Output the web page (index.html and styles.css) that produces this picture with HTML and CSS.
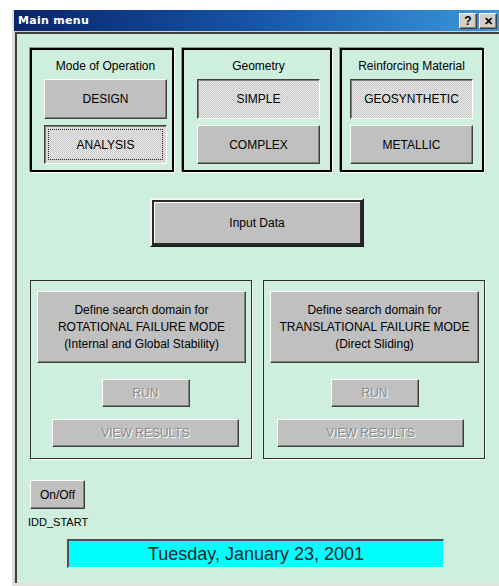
FILE: index.html
```html
<!DOCTYPE html>
<html>
<head>
    <meta charset="UTF-8">
    <title>Main menu</title>
    <link rel="stylesheet" href="styles.css">
</head>
<body>

<div class="window">
    <div class="titlebar">
        <span class="caption">Main menu</span>
        <div class="caption-buttons">
            <span class="cap-btn">?</span>
            <span class="cap-btn cap-close">&#x2715;</span>
        </div>
    </div>

    <div class="client">
        <div class="options">
            <div class="group group-mode">
                <div class="group-title">Mode of Operation</div>
                <button class="btn opt">DESIGN</button>
                <button class="btn opt checked focused"><span>ANALYSIS</span></button>
            </div>
            <div class="group group-geom">
                <div class="group-title">Geometry</div>
                <button class="btn opt checked">SIMPLE</button>
                <button class="btn opt">COMPLEX</button>
            </div>
            <div class="group group-mat">
                <div class="group-title">Reinforcing Material</div>
                <button class="btn opt checked">GEOSYNTHETIC</button>
                <button class="btn opt">METALLIC</button>
            </div>
        </div>

        <button class="btn btn-default">Input Data</button>

        <div class="domains">
            <div class="domain domain-rot">
                <button class="btn define">Define search domain for<br>ROTATIONAL FAILURE MODE<br>(Internal and Global Stability)</button>
                <button class="btn run" disabled>RUN</button>
                <button class="btn results" disabled>VIEW RESULTS</button>
            </div>
            <div class="domain domain-tra">
                <button class="btn define">Define search domain for<br>TRANSLATIONAL FAILURE MODE<br>(Direct Sliding)</button>
                <button class="btn run" disabled>RUN</button>
                <button class="btn results" disabled>VIEW RESULTS</button>
            </div>
        </div>

        <button class="btn onoff">On/Off</button>
        <div class="status-label">IDD_START</div>
        <div class="date-box">Tuesday, January 23, 2001</div>
    </div>
</div>

</body>
</html>
```

FILE: styles.css
```css
body {
    margin: 0;
    background: #fff;
    overflow: hidden;
    font-family: "Liberation Sans", Arial, sans-serif;
    font-size: 12px;
    color: #000;
}

.window {
    margin: 10px 0 0 12px;
    width: 485px;
    border-left: 2px solid #e4e2dc;
    border-bottom: 3px solid #e4e2dc;
    background: #d4d0c8;
}

/* title bar */
.titlebar {
    height: 21px;
    display: flex;
    align-items: center;
    justify-content: space-between;
    padding: 0 2px 0 4px;
    background: linear-gradient(to right, #0a246a 0%, #1655a8 50%, #3a98dc 100%);
}

.caption {
    color: #fff;
    font-family: "DejaVu Sans", Verdana, sans-serif;
    font-weight: bold;
    font-size: 11px;
    letter-spacing: 0.3px;
}

.caption-buttons {
    display: flex;
    gap: 2px;
}

.cap-btn {
    width: 16px;
    height: 14px;
    background: #d4d0c8;
    border: 1px solid;
    border-color: #fff #404040 #404040 #fff;
    box-shadow: inset -1px -1px 0 #808080;
    font-weight: bold;
    font-size: 12px;
    line-height: 14px;
    text-align: center;
    color: #000;
}

.cap-close {
    font-size: 11px;
}

/* client area */
.client {
    margin-top: 1px;
    margin-left: 1px;
    border-top: 2px solid #404040;
    border-left: 2px solid #404040;
    background: #ceeede;
    padding: 14px 0 15px 13px;
    display: flex;
    flex-direction: column;
    align-items: flex-start;
}

/* generic win32 button */
.btn {
    font-family: "Liberation Sans", Arial, sans-serif;
    font-size: 12px;
    color: #000;
    background: #c0c0c0;
    border: 1px solid;
    border-color: #fff #404040 #404040 #fff;
    box-shadow: inset -1px -1px 0 #808080;
    padding: 0;
    margin: 0;
    cursor: pointer;
}

.btn:disabled {
    color: #8a8a8a;
    text-shadow: 1px 1px 0 #fff;
    cursor: default;
}

.btn.checked {
    border-color: #404040 #fff #fff #404040;
    box-shadow: inset 1px 1px 0 #808080;
    background: repeating-conic-gradient(#c6c6c6 0 25%, #ececec 0 50%) 0 0 / 2px 2px;
}

.btn.focused {
    padding: 3px;
}

.btn.focused span {
    display: flex;
    align-items: center;
    justify-content: center;
    height: 100%;
    border: 1px dotted #333;
    box-sizing: border-box;
}

/* top option groups */
.options {
    display: flex;
    gap: 8px;
}

.group {
    height: 124px;
    box-sizing: border-box;
    border: 2px solid #000;
    box-shadow: 1px 1px 0 #fff, -1px -1px 0 #8a9a92;
    display: flex;
    flex-direction: column;
    gap: 6px;
    padding-top: 9px;
}

.group-mode { width: 144px; padding-left: 12px; padding-right: 5px; }
.group-geom { width: 150px; padding-left: 13px; padding-right: 10px; }
.group-mat  { width: 144px; padding-left: 8px; padding-right: 9px; }

.group-title {
    text-align: center;
    line-height: 14px;
}

.opt {
    height: 40px;
}

.opt + .opt {
    height: 39px;
}

/* input data */
.btn-default {
    margin: 26px 0 0 120px;
    width: 214px;
    height: 49px;
    border-width: 2px;
    border-color: #f4f4f4 #202020 #202020 #f4f4f4;
    box-shadow: inset 0 0 0 2px #2a2a2a, inset 3px 3px 0 0 #fff;
}

/* failure mode boxes */
.domains {
    display: flex;
    gap: 11px;
    margin-top: 33px;
}

.domain {
    width: 222px;
    height: 179px;
    box-sizing: border-box;
    border: 1px solid #303030;
    box-shadow: 1px 1px 0 #fff;
    padding: 10px 5px 0 6px;
    display: flex;
    flex-direction: column;
}

.define {
    height: 72px;
    line-height: 17px;
}

.run {
    width: 88px;
    height: 28px;
    margin-top: 16px;
    align-self: center;
}

.results {
    width: 187px;
    height: 28px;
    margin-top: 12px;
    align-self: center;
}

.domain-rot .run { margin-left: 8px; }
.domain-rot .results { margin-left: 8px; }
.domain-tra .results { margin-left: -8px; }

/* bottom */
.onoff {
    margin-top: 21px;
    width: 55px;
    height: 29px;
}

.status-label {
    margin: 6px 0 0 -2px;
    font-size: 11px;
    line-height: 14px;
}

.date-box {
    margin: 10px 0 0 37px;
    width: 377px;
    height: 29px;
    box-sizing: border-box;
    background: #00ffff;
    border-top: 2px solid #505050;
    border-left: 2px solid #505050;
    border-bottom: 1px solid #fff;
    border-right: 1px solid #fff;
    font-size: 18px;
    color: #222;
    text-align: center;
    line-height: 26px;
}
```
